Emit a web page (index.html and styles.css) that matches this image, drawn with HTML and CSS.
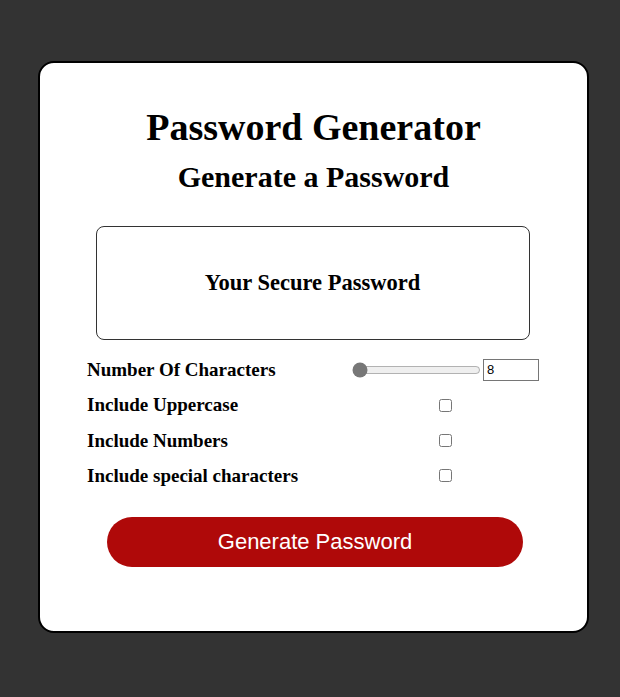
FILE: index.html
```html
<!DOCTYPE html>
<html lang="en">
<head>
<meta charset="utf-8">
<title>Password Generator</title>
<link rel="stylesheet" href="styles.css">
</head>
<body>
<main class="card">
  <h1 class="title">Password Generator</h1>
  <h2 class="subtitle">Generate a Password</h2>
  <div class="output"><h3 class="output-text">Your Secure Password</h3></div>
  <form class="options">
    <label class="label" for="len">Number Of Characters</label>
    <div class="control control-range">
      <input class="range" type="range" min="8" max="32" value="8">
      <input class="num" id="len" type="number" value="8">
    </div>
    <label class="label" for="up">Include Uppercase</label>
    <div class="control"><input id="up" class="check" type="checkbox"></div>
    <label class="label" for="nu">Include Numbers</label>
    <div class="control"><input id="nu" class="check" type="checkbox"></div>
    <label class="label" for="sp">Include special characters</label>
    <div class="control"><input id="sp" class="check" type="checkbox"></div>
  </form>
  <button class="btn" type="button">Generate Password</button>
</main>
</body>
</html>
```
FILE: styles.css
```css
html, body { margin: 0; padding: 0; }
body {
  background: #333333;
  height: 697px;
  overflow: hidden;
  font-family: "Liberation Serif", serif;
}
.card {
  box-sizing: border-box;
  width: 551px;
  height: 572px;
  margin: 61px 0 0 38px;
  background: #fff;
  border: 2px solid #000;
  border-radius: 16px;
  padding: 44px 0 0 0;
  display: flex;
  flex-direction: column;
  align-items: center;
}
.title {
  margin: 0;
  font-size: 38px;
  line-height: 40px;
  font-weight: bold;
}
.subtitle {
  margin: 14px 0 0 0;
  font-size: 30px;
  line-height: 32px;
  font-weight: bold;
}
.output {
  box-sizing: border-box;
  margin: 33px 0 0 -2px;
  width: 434px;
  height: 114px;
  border: 1px solid #333;
  border-radius: 8px;
  display: flex;
  align-items: center;
  justify-content: center;
}
.output-text {
  margin: 0;
  font-size: 22.5px;
  line-height: 26px;
  font-weight: bold;
}
.options {
  align-self: flex-start;
  margin: 12px 0 0 47px;
  width: 453px;
  display: grid;
  grid-template-columns: 263px 190px;
  grid-template-rows: 35px 36px 35px 35px;
  align-items: center;
}
.label {
  font-size: 19px;
  font-weight: bold;
}
.control {
  display: flex;
  justify-content: center;
  align-items: center;
}
.control-range { justify-content: flex-start; }
.range {
  width: 129px;
  margin: 2px;
  accent-color: #777;
}
.num {
  box-sizing: border-box;
  width: 56px;
  height: 22px;
  margin: 0;
  font-family: "Liberation Sans", Arial, sans-serif;
  font-size: 13px;
  padding: 1px 3px;
  border: 1px solid #767676;
  -moz-appearance: textfield;
}
.num::-webkit-inner-spin-button,
.num::-webkit-outer-spin-button { -webkit-appearance: none; margin: 0; }
.check { margin: 0; width: 13px; height: 13px; }
.btn {
  margin: 24px 0 0 3px;
  width: 416px;
  height: 50px;
  border: none;
  border-radius: 25px;
  background: #af0909;
  color: #fff;
  font-family: "Liberation Sans", Arial, sans-serif;
  font-size: 22px;
}
```
